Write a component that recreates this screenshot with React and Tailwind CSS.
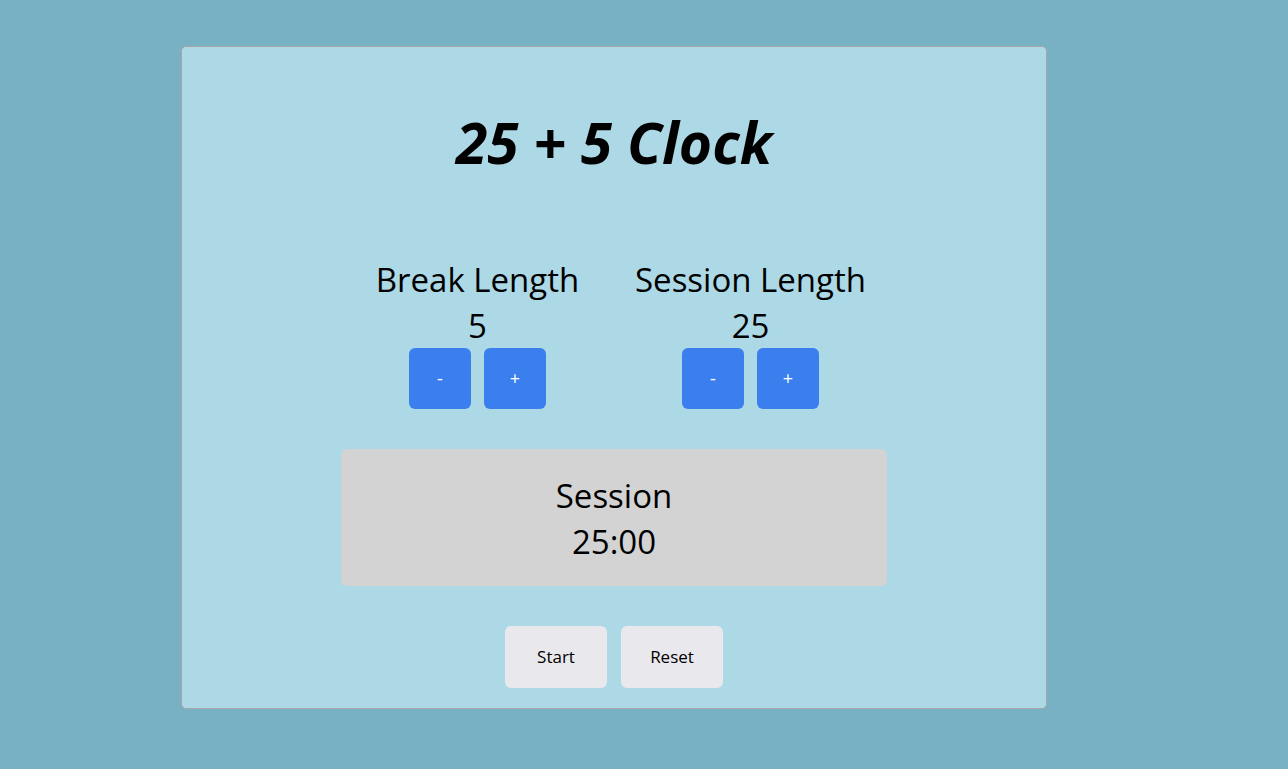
export default function App() {
  return (
    <div
      className="min-h-screen w-full bg-[#78b0c4] pt-[46px] pb-[60px]"
      style={{ fontFamily: '"Open Sans", "Noto Sans", sans-serif' }}
    >
      <div className="ml-[181px] w-[866px] h-[663px] rounded-[5px] border border-[#a7a7a7] bg-[#add8e6] flex flex-col items-center text-black">
        <h1 className="mt-[67px] text-[57px] leading-none font-bold italic">
          25 + 5 Clock
        </h1>

        <div className="mt-[87px] grid grid-cols-2 w-[546px]">
          <LengthControl label="Break Length" value={5} />
          <LengthControl label="Session Length" value={25} />
        </div>

        <div className="mt-[40px] w-[546px] h-[137px] rounded-[6px] bg-[#d3d3d3] flex flex-col items-center justify-center pt-[2px]">
          <div className="text-[33px] leading-[46px]">Session</div>
          <div className="text-[33px] leading-[46px]">25:00</div>
        </div>

        <div className="mt-[40px] flex gap-[14px]">
          <button className="w-[102px] h-[62px] rounded-[6px] bg-[#e9e8ed] text-[17px]">
            Start
          </button>
          <button className="w-[102px] h-[62px] rounded-[6px] bg-[#e9e8ed] text-[17px]">
            Reset
          </button>
        </div>
      </div>
    </div>
  );
}

function LengthControl({ label, value }) {
  return (
    <div className="flex flex-col items-center">
      <div className="text-[33px] leading-[44px] whitespace-nowrap">{label}</div>
      <div className="text-[33px] leading-[44px] mt-[2px]">{value}</div>
      <div className="flex gap-[13px]">
        <button className="w-[62px] h-[61px] rounded-[6px] bg-[#3b7fef] text-white text-[18px]">
          -
        </button>
        <button className="w-[62px] h-[61px] rounded-[6px] bg-[#3b7fef] text-white text-[18px]">
          +
        </button>
      </div>
    </div>
  );
}
